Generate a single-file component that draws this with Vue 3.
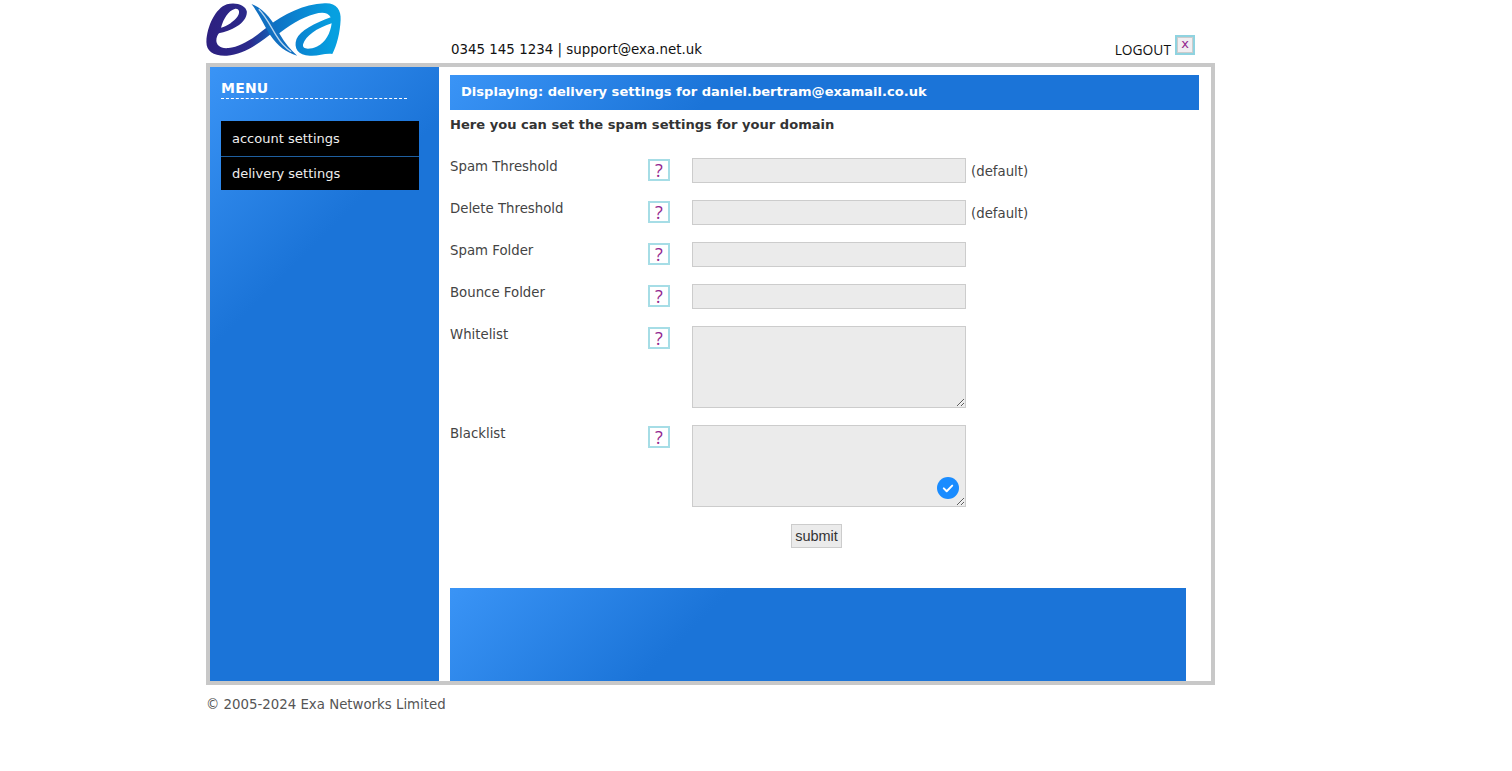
<script setup>
const fields = [
  { label: 'Spam Threshold', note: '(default)' },
  { label: 'Delete Threshold', note: '(default)' },
  { label: 'Spam Folder' },
  { label: 'Bounce Folder' },
  { label: 'Whitelist', area: true },
  { label: 'Blacklist', area: true, badge: true }
]
</script>

<template>
  <div class="page">
    <header class="top">
      <svg class="logo" viewBox="18 0 408 172" width="136" height="57" aria-label="exa">
        <defs>
          <linearGradient id="eg" gradientUnits="userSpaceOnUse" x1="30" y1="0" x2="230" y2="0">
            <stop offset="0" stop-color="#2d2080" />
            <stop offset="0.6" stop-color="#2b2a8c" />
            <stop offset="1" stop-color="#0f6cc0" />
          </linearGradient>
          <linearGradient id="ag" gradientUnits="userSpaceOnUse" x1="205" y1="0" x2="400" y2="0">
            <stop offset="0" stop-color="#0f6cc0" />
            <stop offset="0.5" stop-color="#0a86d2" />
            <stop offset="1" stop-color="#06a0e0" />
          </linearGradient>
        </defs>
        <path fill="url(#eg)" fill-rule="evenodd" d="M56 100C90 95 142 70 140 35C138 15 105 5 80 13C45 25 20 80 18 125C17 155 40 170 80 168C130 165 180 130 225 92L210 75C170 108 125 142 85 145C60 148 48 135 48 122C48 112 52 105 56 100ZM62 84C70 55 85 32 103 27C118 24 120 38 112 50C100 66 82 78 62 84Z" />
        <path fill="url(#ag)" fill-rule="evenodd" d="M205 78C250 45 310 12 375 10C410 8 425 30 423 60C421 100 412 135 398 163C375 160 355 170 330 168C295 168 280 145 290 118C300 92 345 70 393 52C385 36 365 36 345 42C305 52 265 78 228 108ZM310 133C318 108 350 85 396 70C392 100 378 128 352 140C330 150 305 150 310 133Z" />
        <path d="M154 12C192 26 218 62 240 104C254 130 272 150 292 168C258 158 232 138 212 108C194 80 176 40 154 12Z" fill="#1170c2" />
        <path d="M176 28C198 50 212 80 228 106C240 126 256 144 274 156" fill="none" stroke="#b9d6ee" stroke-width="4" />
      </svg>
      <span class="contact">0345 145 1234 | support@exa.net.uk</span>
      <span class="logout">LOGOUT</span>
      <span class="close">x</span>
    </header>

    <main class="frame">
      <nav class="side">
        <h2 class="menu-title">MENU</h2>
        <ul class="menu">
          <li>account settings</li>
          <li>delivery settings</li>
        </ul>
      </nav>

      <section class="content">
        <h1 class="banner">Displaying: delivery settings for daniel.bertram@examail.co.uk</h1>
        <p class="intro">Here you can set the spam settings for your domain</p>

        <form class="form" @submit.prevent>
          <div v-for="f in fields" :key="f.label" class="row" :class="{ tall: f.area }">
            <label class="label">{{ f.label }}</label>
            <span class="help">?</span>
            <div class="control">
              <textarea v-if="f.area" class="box area"></textarea>
              <input v-else class="box" type="text" />
              <span v-if="f.note" class="note">{{ f.note }}</span>
              <span v-if="f.badge" class="badge">
                <svg viewBox="0 0 22 22" width="22" height="22">
                  <circle cx="11" cy="11" r="11" fill="#1a8cff" />
                  <path d="M6.8 11.4l2.9 2.8 5.5-5.6" fill="none" stroke="#fff" stroke-width="2" stroke-linecap="round" stroke-linejoin="round" />
                </svg>
              </span>
            </div>
          </div>
          <button class="submit" type="submit">submit</button>
        </form>

        <div class="band"></div>
      </section>
    </main>

    <footer class="foot">© 2005-2024 Exa Networks Limited</footer>
  </div>
</template>

<style>
html, body { margin: 0; background: #fff; }
</style>

<style scoped>
.page {
  width: 1009px;
  margin-left: 206px;
  font-family: "DejaVu Sans", Verdana, sans-serif;
  font-size: 13.3px;
  color: #333;
}
.top {
  height: 63px;
  display: flex;
  align-items: flex-end;
}
.logo { margin-bottom: 6px; flex: none; }
.contact {
  margin-left: 109px;
  margin-bottom: 6px;
  font-size: 13.4px;
  color: #111;
}
.logout {
  margin-left: auto;
  margin-right: 4px;
  margin-bottom: 4px;
  font-family: "Open Sans", sans-serif;
  font-size: 13.8px;
  color: #111;
}
.close {
  margin-right: 20px;
  margin-bottom: 8px;
  width: 16px;
  height: 16px;
  border: 2px solid #8fd3e0;
  background: #f1eef1;
  box-shadow: inset 0 0 0 1px #ccc;
  color: #93278f;
  font-size: 13px;
  line-height: 14px;
  text-align: center;
}
.frame {
  box-sizing: border-box;
  height: 622px;
  border: 4px solid #c8c8c8;
  display: flex;
}
.side {
  box-sizing: border-box;
  width: 229px;
  flex: none;
  padding: 13px 20px 0 11px;
  background: linear-gradient(135deg, #3a94f6 0, #1b74d8 200px);
}
.menu-title {
  margin: 0;
  width: 186px;
  padding-bottom: 2px;
  border-bottom: 1px dashed #fff;
  color: #fff;
  font-size: 14px;
  font-weight: 700;
  letter-spacing: 0.2px;
  line-height: 16px;
}
.menu {
  margin: 22px 0 0;
  padding: 0;
  list-style: none;
}
.menu li {
  box-sizing: border-box;
  height: 35px;
  padding-left: 11px;
  background: #000;
  color: #eee;
  font-size: 13px;
  line-height: 35px;
}
.menu li + li {
  height: 34px;
  border-top: 1px solid #1f5f9f;
  line-height: 34px;
}
.content {
  flex: 1;
  min-width: 0;
  padding: 8px 0 0 11px;
  display: flex;
  flex-direction: column;
}
.banner {
  box-sizing: border-box;
  margin: 0 12px 0 0;
  height: 35px;
  padding-left: 11px;
  background: linear-gradient(135deg, #3a94f6 0, #1b74d8 200px);
  color: #fff;
  font-size: 13.06px;
  font-weight: 700;
  line-height: 33px;
}
.intro {
  margin: 7px 0 0;
  font-size: 13.07px;
  font-weight: 700;
  line-height: 16px;
}
.form {
  margin-top: 25px;
  display: flex;
  flex-direction: column;
}
.row {
  display: grid;
  grid-template-columns: 198px 44px 1fr;
  height: 42px;
}
.row.tall { height: 99px; }
.label { line-height: 17px; color: #444; }
.help {
  box-sizing: border-box;
  margin-top: 1px;
  width: 22px;
  height: 22px;
  border: 2px solid #a6dde6;
  color: #93278f;
  font-family: "Open Sans", sans-serif;
  font-size: 18px;
  line-height: 18px;
  text-align: center;
}
.control { position: relative; display: flex; align-items: flex-start; }
.box {
  box-sizing: border-box;
  display: block;
  width: 274px;
  height: 25px;
  margin: 0;
  padding: 0 4px;
  border: 1px solid #ccc;
  border-radius: 0;
  background: #ebebeb;
  outline: none;
  font: inherit;
}
.area { height: 82px; }
.note { margin-left: 5px; line-height: 27px; color: #444; }
.badge {
  position: absolute;
  left: 245px;
  top: 52px;
  width: 22px;
  height: 22px;
}
.badge svg { display: block; }
.submit {
  box-sizing: border-box;
  align-self: flex-start;
  margin: 0 0 0 341px;
  width: 51px;
  height: 24px;
  padding: 0;
  border: 1px solid #ccc;
  border-radius: 0;
  background: #ebebeb;
  color: #333;
  font-family: "Liberation Sans", Arial, sans-serif;
  font-size: 14.5px;
}
.band {
  flex: 1;
  margin-top: 40px;
  width: 736px;
  background: linear-gradient(135deg, #3a94f6 0, #1b74d8 200px);
}
.foot {
  margin-top: 12px;
  color: #555;
  font-size: 13.33px;
  line-height: 16px;
}
</style>
